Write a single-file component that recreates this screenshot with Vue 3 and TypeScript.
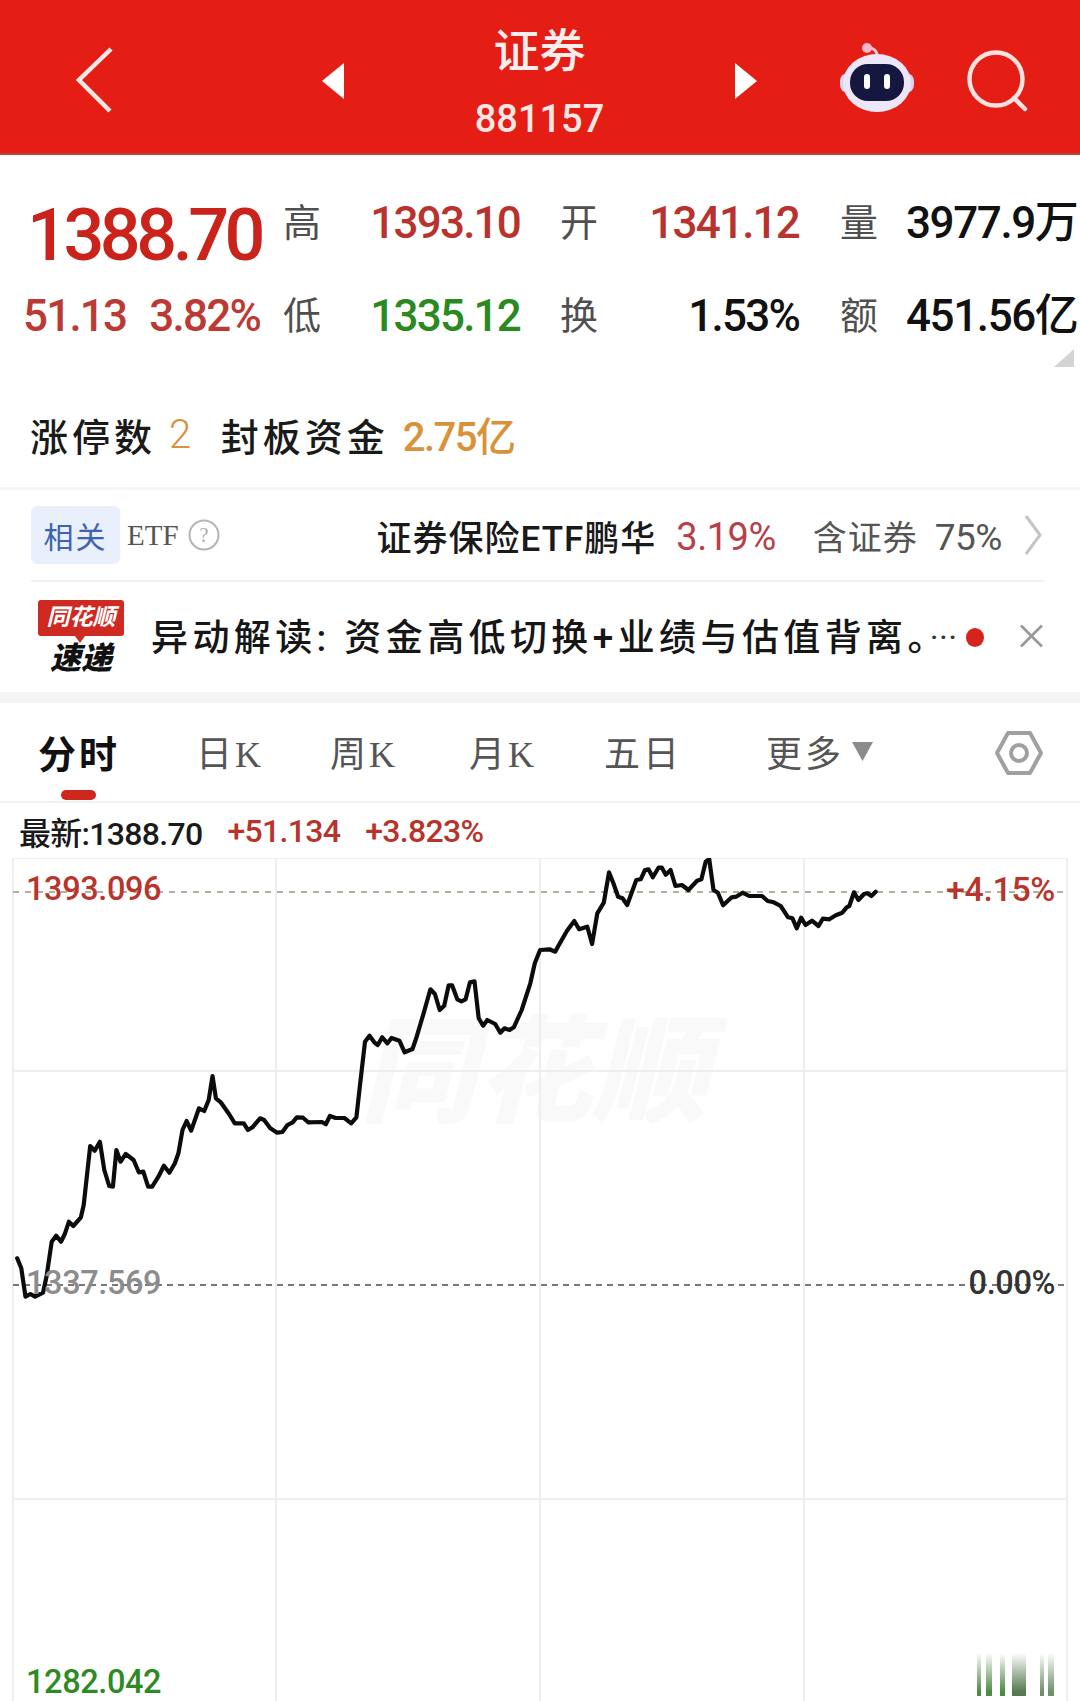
<script setup lang="ts">
const leftRaw: number[][] = [
  [50,1255],[62,1285],[74,1370],[88,1362],[102,1370],[125,1358],[135,1310],[150,1205],[163,1187],[177,1205],[188,1183],[200,1145],[213,1158],[235,1132],[243,1095],[262,918],[275,932],[290,905],[303,990],[317,1038],[328,1040],[338,930],[350,965],[365,942],[388,960],[403,997],[416,995],[430,1040],[442,1040],[460,1010],[476,977],[492,998],[508,970],[518,940],[530,870],[542,843],[555,872],[578,805],[593,813],[606,780],[617,708],[627,775],[642,788],[665,822],[682,850],[708,850],[720,870],[733,862],[755,835],[767,840],[785,865],[805,878],[820,876],[835,855],[850,847],[862,832],[880,833],[895,847],[935,846],[946,853],[958,828],[975,834],[1000,834],[1020,850],[1035,832],[1045,740],[1060,605],[1073,587],[1087,607],[1097,615],[1110,592],[1125,610],[1137,594],[1160,602],[1175,637],[1198,627],[1210,590],[1230,520],[1250,448],[1263,462],[1277,510],[1290,497],[1303,436],[1313,436],[1328,478],[1340,484],[1352,478],[1365,427],[1378,424],[1390,535],[1403,557],[1415,540],[1438,552],[1453,578],[1465,565],[1480,570],[1492,562],[1515,510],[1540,430],[1553,370]
]
const rightRaw: number[][] = [
  [323,330],[345,328],[358,335],[365,318],[385,272],[402,243],[413,268],[432,260],[443,312],[455,220],[470,188],[482,97],[492,130],[503,170],[513,175],[524,195],[545,120],[555,118],[565,90],[573,88],[583,112],[596,83],[604,83],[613,104],[624,90],[635,138],[650,135],[665,150],[685,122],[695,118],[705,65],[713,57],[723,150],[733,158],[745,196],[765,172],[775,170],[790,158],[805,168],[835,168],[848,183],[862,187],[878,198],[895,232],[905,235],[915,265],[925,233],[935,255],[950,242],[965,258],[975,236],[990,238],[1005,226],[1020,218],[1030,202],[1036,198],[1047,157],[1057,180],[1070,162],[1078,160],[1087,168],[1097,155]
]
const pricePoints = [
  ...leftRaw.map(([x, y]) => [x / 2.904, 840 + y / 3]),
  ...rightRaw.map(([x, y]) => [400 + x / 2.306, 840 + y / 3])
].map(([x, y]) => `${x.toFixed(1)},${y.toFixed(1)}`).join(' ')

const tabs = ['分时', '日K', '周K', '月K', '五日', '更多']
const gridX = [13, 276, 540, 804, 1067]
const gridY = [858, 1071, 1499]
</script>

<template>
  <div class="page">
    <header class="top">
      <svg class="back" width="40" height="66" viewBox="0 0 40 66"><path d="M35 2 3 33l31 31" fill="none" stroke="#fde8e6" stroke-width="4.5" /></svg>
      <svg class="tri" width="24" height="36" viewBox="0 0 24 36"><path d="M22 0 0 18l22 18z" fill="#fff" /></svg>
      <div class="title">
        <div class="name">证券</div>
        <div class="code">881157</div>
      </div>
      <svg class="tri" width="24" height="36" viewBox="0 0 24 36"><path d="M2 0l22 18L2 36z" fill="#fff" /></svg>
      <div class="tools">
        <svg class="robot" width="74" height="80" viewBox="0 0 74 80">
          <path d="M37 18c1-7-4-11-10-10" fill="none" stroke="#f3c9d6" stroke-width="3" />
          <circle cx="27" cy="8" r="5" fill="#f6b9cc" />
          <rect x="0" y="33" width="74" height="20" rx="8" fill="#dcd3f0" />
          <ellipse cx="37" cy="43" rx="34" ry="29" fill="#ece6f8" />
          <rect x="10" y="24" width="54" height="37" rx="18" fill="#15173f" />
          <rect x="24" y="34" width="6" height="15" rx="3" fill="#fff" />
          <rect x="44" y="34" width="6" height="15" rx="3" fill="#fff" />
        </svg>
        <svg class="search" width="62" height="64" viewBox="0 0 62 64">
          <circle cx="30" cy="31" r="26.5" fill="none" stroke="#fde2e0" stroke-width="4.5" />
          <path d="M48 50l11 11" stroke="#fde2e0" stroke-width="4.5" stroke-linecap="round" />
        </svg>
      </div>
    </header>

    <section class="stats">
      <div class="grid">
        <div class="big">1388.70</div>
        <div class="lab l1">高</div>
        <div class="val red v1">1393.10</div>
        <div class="lab l2">开</div>
        <div class="val red v2">1341.12</div>
        <div class="lab l3">量</div>
        <div class="val v3">3977.9万</div>

        <div class="chg"><span>51.13</span><span>3.82%</span></div>
        <div class="lab l1">低</div>
        <div class="val green v1">1335.12</div>
        <div class="lab l2">换</div>
        <div class="val v2">1.53%</div>
        <div class="lab l3">额</div>
        <div class="val v3">451.56亿</div>
      </div>
      <svg class="corner" width="20" height="18" viewBox="0 0 20 18"><path d="M20 0v18H0z" fill="#d4d4d4" /></svg>
      <div class="limit">
        <span>涨停数</span><span class="orange one">2</span><span class="seal">封板资金</span><span class="orange cash">2.75亿</span>
      </div>
    </section>

    <section class="etf">
      <span class="badge">相关</span>
      <span class="etf-word">ETF</span>
      <svg class="help" width="32" height="32" viewBox="0 0 32 32">
        <circle cx="16" cy="16" r="14.5" fill="none" stroke="#b4b4b4" stroke-width="2" />
        <text x="16" y="23" text-anchor="middle" font-size="20" fill="#aaa" font-family="Liberation Serif">?</text>
      </svg>
      <span class="fund">证券保险ETF鹏华</span>
      <span class="fund-pct">3.19%</span>
      <span class="hold">含证券</span>
      <span class="hold-pct">75%</span>
      <svg class="more" width="18" height="40" viewBox="0 0 18 40"><path d="M2 1l14 19L2 39" fill="none" stroke="#c4c4c4" stroke-width="3" /></svg>
    </section>

    <section class="news">
      <div class="logo">
        <div class="logo-red">同花顺</div>
        <div class="logo-black">速递</div>
      </div>
      <div class="headline">异动解读: 资金高低切换+业绩与估值背离。<span class="dots">···</span></div>
      <span class="dot"></span>
      <svg class="close" width="24" height="24" viewBox="0 0 24 24"><path d="M1 1l22 22M23 1 1 23" stroke="#9a9a9a" stroke-width="2.8" /></svg>
    </section>

    <nav class="tabs">
      <div v-for="(t, i) in tabs" :key="t" class="tab" :class="{ on: i === 0 }">
        {{ t }}
        <i v-if="i === 0" class="bar"></i>
        <svg v-if="i === 5" class="caret" width="21" height="19" viewBox="0 0 21 19"><path d="M0 0h21L10.500 19z" fill="#8c8c8c" /></svg>
      </div>
      <svg class="gear" width="48" height="46" viewBox="0 0 48 46">
        <path d="M13 3h22l11 20-11 20H13L2 23z" fill="none" stroke="#a0a0a0" stroke-width="4" stroke-linejoin="round" />
        <circle cx="24" cy="23" r="8" fill="none" stroke="#a0a0a0" stroke-width="4" />
      </svg>
    </nav>

    <div class="latest">
      <span class="now">最新:1388.70</span>
      <span class="up">+51.134</span>
      <span class="up">+3.823%</span>
    </div>

    <div class="chart">
      <svg class="plot" width="1080" height="843" viewBox="0 858 1080 843">
        <line v-for="x in gridX" :key="x" :x1="x" :x2="x" y1="858" y2="1701" stroke="#eeeeee" stroke-width="2" />
        <line v-for="y in gridY" :key="y" x1="13" x2="1067" :y1="y" :y2="y" stroke="#eeeeee" stroke-width="2" />
        <line x1="13" x2="1067" y1="892" y2="892" stroke="#b3b09c" stroke-width="2" stroke-dasharray="6 6" />
        <line x1="13" x2="1067" y1="1285" y2="1285" stroke="#777" stroke-width="2" stroke-dasharray="6 5" />
        <polyline :points="pricePoints" fill="none" stroke="#0c0c0c" stroke-width="4.2" stroke-linejoin="round" stroke-linecap="round" />
      </svg>
      <div class="mark">同花顺</div>
      <span class="tag tl red-t">1393.096</span>
      <span class="tag tr red-t">+4.15%</span>
      <span class="tag ml gray-t">1337.569</span>
      <span class="tag mr dark-t">0.00%</span>
      <span class="tag bl green-t">1282.042</span>
      <div class="stamp"><i></i><i></i><i></i><i></i><i></i></div>
    </div>
  </div>
</template>

<style>
html, body { margin: 0; background: #fff; }
</style>

<style scoped>
.page {
  width: 1080px;
  height: 1701px;
  overflow: hidden;
  background: #fff;
  color: #111;
  font-family: Roboto, "Noto Sans CJK SC", sans-serif;
}

.top {
  display: grid;
  grid-template-columns: 322px 24px 387px 24px 1fr;
  align-items: center;
  height: 153px;
  background: #e41d15;
  border-bottom: 2px solid #b8433c;
}
.back { margin: 6px 0 0 76px; }
.tri { margin-top: 9px; }
.title { display: flex; flex-direction: column; align-items: center; color: #fff; align-self: start; padding-top: 26px; }
.name { font-size: 46px; line-height: 50px; font-weight: 500; color: #fdeeee; }
.code { font-size: 38px; line-height: 46px; margin-top: 20px; font-weight: 500; color: #fbe6e4; }
.tools { display: flex; padding-left: 83px; gap: 52px; margin-top: 7px; }
.search { margin-top: 8px; }

.stats { position: relative; height: 332px; border-bottom: 3px solid #f6f6f6; }
.grid {
  display: grid;
  grid-template-columns: 262px 100px 158px 100px 179px 100px 181px;
  grid-auto-rows: 93px;
  padding-top: 21px;
  align-items: center;
}
.big { font-size: 72px; color: #c9231c; font-weight: 500; letter-spacing: -4.5px; margin: 26px 0 0 27px; line-height: 1; white-space: nowrap; }
.chg { display: flex; justify-content: space-between; padding: 0 2px 0 23px; color: #bb3a34; font-size: 44px; font-weight: 500; letter-spacing: -1.8px; }
.lab { font-size: 38px; color: #4f4f4f; line-height: 44px; }
.l1 { padding-left: 21px; }
.l2 { padding-left: 40px; }
.l3 { padding-left: 41px; }
.val { font-size: 44px; font-weight: 500; letter-spacing: -1.8px; white-space: nowrap; line-height: 50px; }
.v1, .v2 { text-align: right; }
.v3 { padding-left: 7px; letter-spacing: -1.4px; color: #111; }
.red { color: #b9332e; }
.green { color: #2b8a1f; }
.corner { position: absolute; right: 6px; top: 194px; }

.limit { display: flex; align-items: center; height: 76px; margin-top: 34px; padding-left: 30px; font-size: 38px; font-weight: 500; letter-spacing: 4px; color: #1a1a1a; }
.orange { color: #d8923a; letter-spacing: -1.5px; font-size: 40px; font-weight: 500; }
.one { margin-left: 13px; font-weight: 300; }
.seal { margin-left: 31px; }
.cash { margin-left: 14px; }

.etf { display: flex; align-items: center; height: 92px; margin: 0 35px 0 31px; border-bottom: 2px solid #f1f1f1; box-sizing: border-box; }
.badge { display: flex; align-items: center; justify-content: center; width: 89px; height: 58px; background: #e9effb; border-radius: 6px; color: #3f64ae; font-size: 30px; letter-spacing: 2px; }
.etf-word { margin-left: 7px; font-family: "Liberation Serif", serif; font-size: 29px; color: #555; }
.help { margin-left: 9px; }
.fund { margin-left: 157px; font-size: 35px; font-weight: 500; color: #1a1a1a; letter-spacing: 1px; white-space: nowrap; }
.fund-pct { margin: 4px 0 0 20px; font-size: 38px; color: #b8404a; font-weight: 400; letter-spacing: -0.5px; }
.hold { margin-left: 37px; font-size: 34px; letter-spacing: 1px; color: #555; }
.hold-pct { margin: 4px 0 0 17px; font-size: 37px; color: #555; font-weight: 400; letter-spacing: -0.5px; }
.more { margin-left: 22px; }

.news { display: flex; align-items: center; height: 121px; padding: 0 37px 11px 38px; box-sizing: border-box; border-bottom: 11px solid #f3f3f3; }
.logo { width: 86px; display: flex; flex-direction: column; align-items: center; margin-top: 13px; }
.logo-red { position: relative; width: 86px; height: 36px; background: #cf2a22; border-radius: 3px; color: #fff; font-size: 23px; font-weight: 700; font-style: italic; text-align: center; line-height: 36px; }
.logo-red::after { content: ""; position: absolute; left: 37px; bottom: -7px; border-style: solid; border-color: #cf2a22 transparent transparent; border-width: 7px 5px 0; }
.logo-black { font-size: 31px; font-weight: 900; font-style: italic; line-height: 34px; margin-top: 6px; color: #111; }
.headline { margin: 6px 0 0 27px; font-size: 37px; font-weight: 500; letter-spacing: 4.4px; color: #161616; white-space: nowrap; width: 803px; }
.dots { font-size: 24px; font-weight: 700; color: #333; letter-spacing: 2px; vertical-align: 6px; }
.dot { width: 19px; height: 19px; border-radius: 50%; background: #d5241f; margin: 12px 0 0 12px; }
.close { margin: 8px 0 0 36px; }

.tabs {
  display: grid;
  grid-template-columns: 158px 134px 139px 135px 162px 1fr;
  align-items: center;
  position: relative;
  height: 100px;
  padding: 0 37px 0 38px;
  box-sizing: border-box;
  border-bottom: 2px solid #f0f0f0;
}
.tab { position: relative; font-family: "Liberation Serif", "Noto Sans CJK SC", serif; font-size: 36px; letter-spacing: 3px; color: #555; white-space: nowrap; display: flex; align-items: center; margin-top: -2px; }
.tab.on { color: #111; font-weight: 700; font-size: 38px; }
.bar { position: absolute; left: 23px; bottom: -21px; width: 35px; height: 10px; border-radius: 5px; background: #cf2720; }
.caret { margin: 0 0 0 8px; }
.gear { position: absolute; right: 37px; top: 27px; }

.latest { display: flex; align-items: center; height: 55px; padding-left: 19px; font-size: 32px; font-weight: 500; letter-spacing: -0.7px; }
.now { color: #1a1a1a; }
.up { color: #b8332a; margin-left: 25px; }

.chart { position: relative; height: 843px; }
.mark { position: absolute; left: 360px; top: 150px; font-size: 116px; font-weight: 900; font-style: italic; color: #f9f9f9; white-space: nowrap; line-height: 130px; }
.plot { display: block; position: relative; z-index: 1; }
.tag { position: absolute; z-index: 2; font-size: 32.500px; font-weight: 500; line-height: 40px; letter-spacing: -0.4px; white-space: nowrap; }
.tl { left: 26px; top: 11px; }
.tr { right: 25px; top: 11px; font-size: 34px; }
.ml { left: 26px; top: 405px; }
.mr { right: 25px; top: 405px; }
.bl { left: 26px; top: 804px; }
.red-t { color: #b9352c; }
.gray-t { color: #8c8c8c; }
.dark-t { color: #333; }
.green-t { color: #2f8a25; }
.stamp { position: absolute; left: 977px; top: 795px; display: flex; height: 43px; z-index: 2; }
.stamp i { width: 4px; background: linear-gradient(#fff, #4f8a45 90%); }
.stamp i:nth-child(2) { width: 6px; margin-left: 5px; }
.stamp i:nth-child(3) { width: 5px; margin-left: 8px; }
.stamp i:nth-child(4) { width: 14px; margin-left: 7px; background: linear-gradient(#fff, #557a50 90%); }
.stamp i:nth-child(5) { width: 14px; margin-left: 14px; background: linear-gradient(#fff, transparent 90%), linear-gradient(90deg, #6f8f68 30%, #fff 30% 60%, #6f8f68 60%); }
</style>
